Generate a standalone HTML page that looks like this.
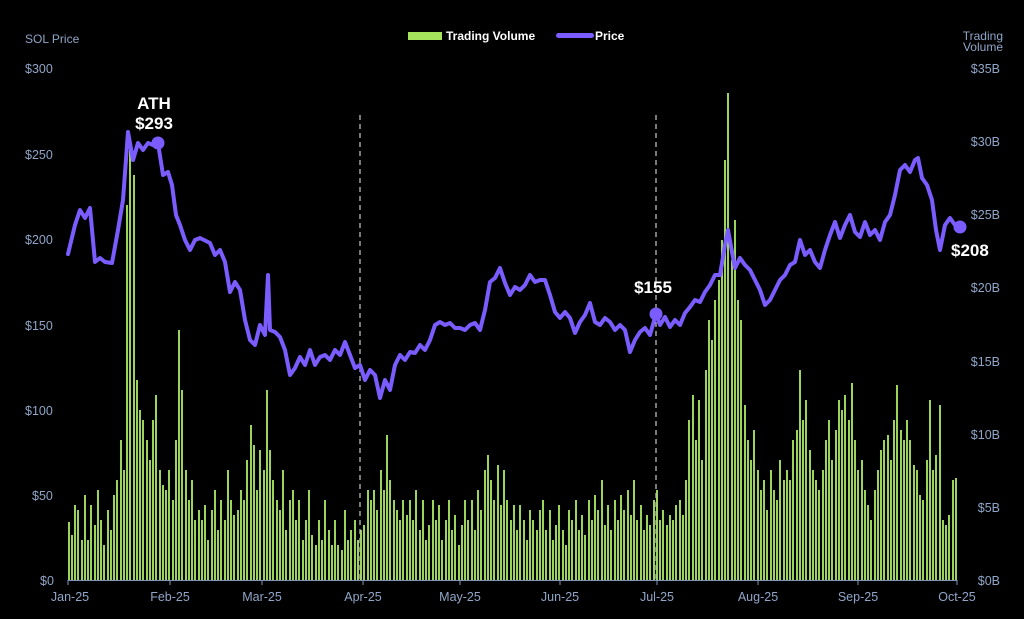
<!DOCTYPE html>
<html><head><meta charset="utf-8"><style>
html,body{margin:0;padding:0;background:#000;width:1024px;height:619px;overflow:hidden}
svg{display:block}
text{font-family:"Liberation Sans",sans-serif}
</style></head><body>
<svg width="1024" height="619" xmlns="http://www.w3.org/2000/svg">
<rect width="1024" height="619" fill="#000"/>
<path fill="none" stroke="#9bd45a" stroke-width="2" d="M69 580V522M72 580V535M75 580V505M78 580V510M82 580V540M85 580V495M88 580V540M91 580V505M95 580V525M98 580V490M101 580V520M104 580V545M108 580V510M111 580V530M114 580V495M117 580V480M121 580V440M124 580V470M127 580V205M130 580V150M134 580V175M137 580V380M140 580V410M143 580V420M147 580V440M150 580V460M153 580V420M156 580V395M160 580V470M163 580V485M166 580V490M169 580V470M173 580V500M176 580V440M179 580V330M182 580V390M186 580V470M189 580V500M192 580V480M195 580V520M199 580V510M202 580V520M205 580V505M208 580V540M212 580V510M215 580V490M218 580V530M221 580V500M225 580V520M228 580V470M231 580V500M234 580V515M238 580V510M241 580V490M244 580V500M247 580V460M251 580V425M254 580V445M257 580V490M260 580V450M264 580V470M267 580V390M270 580V450M273 580V480M277 580V500M280 580V510M283 580V470M286 580V530M290 580V500M293 580V490M296 580V520M299 580V500M303 580V540M306 580V520M309 580V490M312 580V535M316 580V545M319 580V520M322 580V540M325 580V500M329 580V530M332 580V545M335 580V520M338 580V545M342 580V550M345 580V510M348 580V540M351 580V530M355 580V520M358 580V540M361 580V530M364 580V525M368 580V490M371 580V500M374 580V490M377 580V510M381 580V470M384 580V490M387 580V435M390 580V480M394 580V500M397 580V510M400 580V520M403 580V500M407 580V515M410 580V500M413 580V520M416 580V490M420 580V530M423 580V500M426 580V540M429 580V525M433 580V500M436 580V520M439 580V505M442 580V540M446 580V520M449 580V500M452 580V530M455 580V515M459 580V545M462 580V525M465 580V500M468 580V520M472 580V500M475 580V530M478 580V490M481 580V510M485 580V470M488 580V455M491 580V480M494 580V500M498 580V465M501 580V505M504 580V470M507 580V500M511 580V520M514 580V505M517 580V530M520 580V505M524 580V520M527 580V540M530 580V510M533 580V520M537 580V530M540 580V510M543 580V500M546 580V530M550 580V510M553 580V540M556 580V525M559 580V505M563 580V530M566 580V545M569 580V510M572 580V520M576 580V500M579 580V530M582 580V515M585 580V535M589 580V500M592 580V520M595 580V495M598 580V510M602 580V480M605 580V525M608 580V505M611 580V530M615 580V500M618 580V520M621 580V495M624 580V510M628 580V490M631 580V515M634 580V480M637 580V520M641 580V505M644 580V530M647 580V515M650 580V525M654 580V500M657 580V490M660 580V520M663 580V510M667 580V525M670 580V515M673 580V520M676 580V505M680 580V500M683 580V515M686 580V480M689 580V420M693 580V395M696 580V440M699 580V400M702 580V460M706 580V370M709 580V320M712 580V340M715 580V300M719 580V280M722 580V240M725 580V160M728 580V93M732 580V260M735 580V220M738 580V300M741 580V320M745 580V405M748 580V440M751 580V460M754 580V430M758 580V470M761 580V490M764 580V480M767 580V510M771 580V470M774 580V490M777 580V500M780 580V460M784 580V480M787 580V470M790 580V480M793 580V440M797 580V430M800 580V370M803 580V420M806 580V400M810 580V450M813 580V470M816 580V480M819 580V490M823 580V470M826 580V440M829 580V420M832 580V460M836 580V430M839 580V400M842 580V410M845 580V395M849 580V420M852 580V383M855 580V440M858 580V470M862 580V460M865 580V490M868 580V505M871 580V520M875 580V490M878 580V470M881 580V450M884 580V440M888 580V435M891 580V460M894 580V420M897 580V385M901 580V430M904 580V440M907 580V420M910 580V440M914 580V465M917 580V470M920 580V495M923 580V500M927 580V460M930 580V400M933 580V470M936 580V455M940 580V405M943 580V520M946 580V525M949 580V515M953 580V480M956 580V478"/>
<line x1="360" y1="115" x2="360" y2="580" stroke="#bbb" stroke-width="1.3" stroke-dasharray="5,4"/>
<line x1="656" y1="115" x2="656" y2="580" stroke="#bbb" stroke-width="1.3" stroke-dasharray="5,4"/>
<line x1="68" y1="580.5" x2="957" y2="580.5" stroke="#8096b8" stroke-width="1"/>
<path stroke="#8096b8" d="M68 580v5M170 580v5M262 580v5M363 580v5M460 580v5M560 580v5M657 580v5M758 580v5M858 580v5M957 580v5"/>
<polyline fill="none" stroke="#7b5cff" stroke-width="4" stroke-linejoin="round" stroke-linecap="round" points="68,254 75,225 80,210 85,218 90,208 95,262 100,258 105,262 112,263 118,230 123,200 128,132 133,160 138,143 143,150 148,143 153,145 158,143 163,175 168,172 172,185 176,215 180,225 185,240 190,250 195,240 200,238 210,243 215,255 220,250 225,262 230,292 235,282 240,290 245,320 250,340 255,345 260,325 265,335 268,275 270,330 275,332 280,337 285,350 290,375 295,368 300,357 305,365 310,350 315,365 320,357 325,355 330,360 335,350 340,355 345,342 350,355 355,368 360,365 365,380 370,370 375,375 380,398 385,380 390,390 395,365 400,355 405,360 410,352 415,353 420,345 425,350 430,340 435,325 440,322 445,325 450,323 455,328 460,328 465,330 470,325 475,323 480,330 485,310 490,282 495,278 500,268 505,283 510,295 515,287 520,290 525,285 530,275 535,282 540,280 545,280 550,295 555,312 560,318 565,312 570,318 575,333 580,322 585,315 590,303 595,322 600,325 605,318 610,322 615,330 620,325 625,330 630,352 635,340 640,332 645,328 650,335 656,314 660,325 665,317 670,327 675,320 680,325 685,313 690,307 695,300 700,302 705,292 710,285 715,275 720,275 725,245 728,230 732,252 735,268 740,258 745,265 750,270 755,280 760,290 765,305 770,300 775,290 780,280 785,275 790,265 795,262 800,240 805,255 810,250 815,262 820,268 825,250 830,235 835,222 840,238 845,225 850,215 855,232 860,237 865,222 870,235 875,230 880,240 885,222 890,215 895,195 900,170 905,165 910,172 915,160 918,158 922,178 927,185 932,200 936,230 940,250 945,225 950,218 955,225 960,227"/>
<circle cx="158" cy="143" r="6.5" fill="#7b5cff"/>
<circle cx="656" cy="314" r="6.5" fill="#7b5cff"/>
<circle cx="960" cy="227" r="6.5" fill="#7b5cff"/>
<g fill="#fff" font-weight="bold" font-size="17" text-anchor="middle">
<text x="154" y="109">ATH</text><text x="154" y="129">$293</text>
<text x="653" y="293">$155</text>
<text x="951" y="256" text-anchor="start">$208</text>
</g>
<g fill="#8fa6c8" font-size="12.5">
<text x="25" y="43" font-size="12">SOL Price</text>
<text x="25" y="73">$300</text><text x="25" y="159">$250</text><text x="25" y="244">$200</text>
<text x="25" y="330">$150</text><text x="25" y="415">$100</text><text x="32" y="500">$50</text><text x="40" y="585">$0</text>
</g>
<g fill="#8fa6c8" font-size="12.5" text-anchor="end">
<text x="1003" y="40" font-size="12">Trading</text><text x="1003" y="51" font-size="12">Volume</text>
<text x="1000" y="73">$35B</text><text x="1000" y="146">$30B</text><text x="1000" y="219">$25B</text>
<text x="1000" y="292">$20B</text><text x="1000" y="366">$15B</text><text x="1000" y="439">$10B</text>
<text x="1000" y="512">$5B</text><text x="1000" y="585">$0B</text>
</g>
<g fill="#8fa6c8" font-size="12.5" text-anchor="middle">
<text x="70" y="601">Jan-25</text><text x="170" y="601">Feb-25</text><text x="262" y="601">Mar-25</text>
<text x="363" y="601">Apr-25</text><text x="460" y="601">May-25</text><text x="560" y="601">Jun-25</text>
<text x="657" y="601">Jul-25</text><text x="758" y="601">Aug-25</text><text x="858" y="601">Sep-25</text><text x="957" y="601">Oct-25</text>
</g>
<rect x="408" y="32" width="34" height="8" fill="#a6e35c"/>
<text x="446" y="40" fill="#fff" font-size="12" font-weight="bold">Trading Volume</text>
<rect x="556" y="33" width="38" height="5" rx="2.5" fill="#7b5cff"/>
<text x="595" y="40" fill="#fff" font-size="12" font-weight="bold">Price</text>
</svg>
</body></html>
